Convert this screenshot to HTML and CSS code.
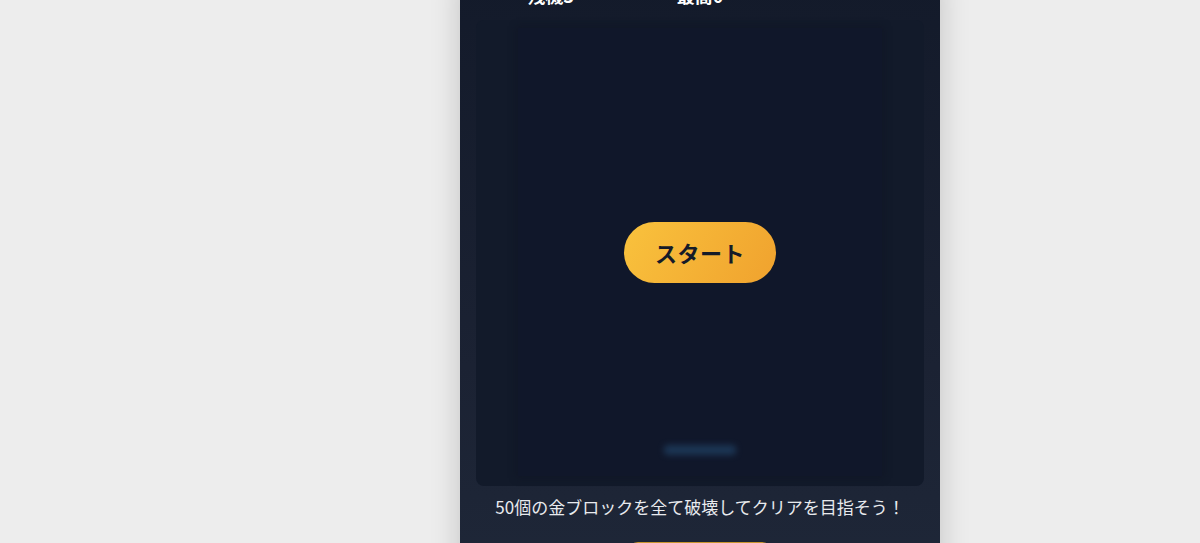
FILE: index.html
```html
<!DOCTYPE html>
<html lang="ja">
<head>
    <meta charset="UTF-8">
    <meta name="viewport" content="width=device-width, initial-scale=1.0">
    <title>ゴールドブロック崩し</title>
    <link rel="stylesheet" href="styles.css">
</head>
<body>
    <div class="app">
        <!-- Status Bar -->
        <div class="stats">
            <div class="stat">残機3</div>
            <div class="stat">最高0</div>
            <div class="stat"></div>
        </div>

        <!-- Game Area -->
        <div class="board">
            <div class="field">
                <div class="paddle"></div>
                <div class="overlay">
                    <button class="start-btn">スタート</button>
                </div>
            </div>
        </div>

        <p class="hint">50個の金ブロックを全て破壊してクリアを目指そう！</p>

        <div class="actions">
            <button class="reset-btn">リセット</button>
        </div>
    </div>
</body>
</html>
```

FILE: styles.css
```css
/* General Styles */
body {
    font-family: "Noto Sans CJK JP", "Noto Sans", sans-serif;
    background: #ededed;
    margin: 0;
    padding: 0 0 0 200px;
    color: #e5e7eb;
    overflow: hidden;
}

/* Main Column */
.app {
    width: 480px;
    margin: -22px auto 0;
    padding: 0 16px 40px;
    box-sizing: border-box;
    min-height: 620px;
    background: linear-gradient(180deg, #131a2a 0%, #1b2233 60%, #1f2839 100%);
    box-shadow: 0 0 28px rgba(0, 0, 0, 0.18);
}

/* Status Bar */
.stats {
    display: grid;
    grid-template-columns: repeat(3, 1fr);
    height: 34px;
    align-items: center;
    margin-bottom: 8px;
}

.stat {
    text-align: center;
    font-size: 18px;
    font-weight: bold;
    color: #ffffff;
}

/* Game Board */
.board {
    background: #121a2a;
    border-radius: 8px;
    padding: 8px 0 10px;
    display: flex;
    justify-content: center;
}

.field {
    position: relative;
    width: 364px;
    height: 448px;
    background: #10172a;
    box-shadow: 0 0 6px 2px rgba(16, 23, 38, 0.8);
}

.paddle {
    position: absolute;
    left: 146px;
    bottom: 21px;
    width: 72px;
    height: 10px;
    border-radius: 4px;
    background: #1e3b5c;
    filter: blur(3px);
    opacity: 0.85;
}

.overlay {
    position: absolute;
    inset: 0;
    display: flex;
    align-items: center;
    justify-content: center;
}

.start-btn {
    width: 152px;
    height: 61px;
    border: none;
    border-radius: 31px;
    background: linear-gradient(120deg, #f9c23d 0%, #f0a22e 100%);
    color: #151b28;
    font-family: inherit;
    font-size: 22px;
    font-weight: bold;
    letter-spacing: 0.5px;
    cursor: pointer;
}

/* Hint Text */
.hint {
    margin: 8px 0 0;
    text-align: center;
    font-size: 17px;
    line-height: 26px;
    color: #e8eaee;
}

.actions {
    display: flex;
    justify-content: center;
    margin-top: 22px;
}

.reset-btn {
    width: 144px;
    height: 44px;
    border: 2px solid #c9952d;
    border-radius: 10px;
    background: #2a2a27;
    color: #f5c04a;
    font-family: inherit;
    font-size: 16px;
    font-weight: bold;
}
```
